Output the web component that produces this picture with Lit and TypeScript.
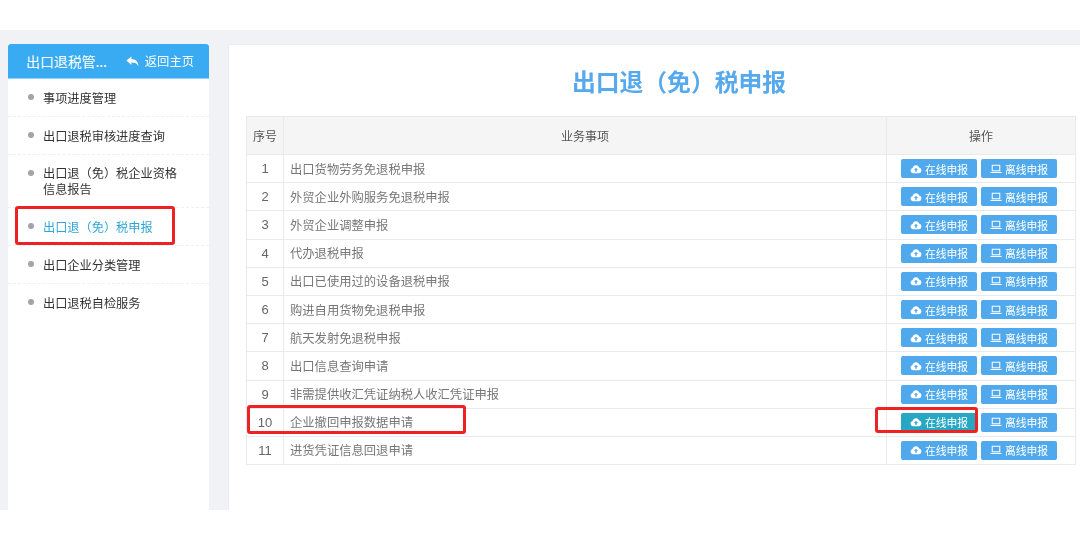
import { LitElement, html, css, svg } from "lit";
import { customElement } from "lit/decorators.js";

const rows = [
  "出口货物劳务免退税申报",
  "外贸企业外购服务免退税申报",
  "外贸企业调整申报",
  "代办退税申报",
  "出口已使用过的设备退税申报",
  "购进自用货物免退税申报",
  "航天发射免退税申报",
  "出口信息查询申请",
  "非需提供收汇凭证纳税人收汇凭证申报",
  "企业撤回申报数据申请",
  "进货凭证信息回退申请",
];
const menu = [
  { t: "事项进度管理" },
  { t: "出口退税审核进度查询" },
  { t: "出口退（免）税企业资格信息报告", tall: true },
  { t: "出口退（免）税申报", active: true },
  { t: "出口企业分类管理" },
  { t: "出口退税自检服务" },
];

const cloud = svg`<svg class="ic" viewBox="0 0 16 12" width="12" height="10"><path fill="#fff" d="M4 11.5a3.5 3.5 0 0 1-.6-6.9A4.6 4.6 0 0 1 12.2 4a3.8 3.8 0 0 1-.2 7.5z"/><path fill="#4fa9ec" d="M8 4.2l2.6 3H9v2.6H7V7.2H5.4z"/></svg>`;
const laptop = svg`<svg class="ic" viewBox="0 0 14 11" width="12" height="10"><path fill="none" stroke="#fff" stroke-width="1.2" d="M2.6 1h8.8v6.6H2.6z"/><path fill="#fff" d="M.5 8.9h13v1.3H.5z"/></svg>`;
const back = svg`<svg viewBox="0 0 14 12" width="13" height="11"><path fill="#fff" d="M5.8.6v2.7c4.6.2 7.5 2.7 7.7 7.8-1.5-3-3.8-4-7.7-4v2.800L.4 5z"/></svg>`;

@customElement("app-root")
export class AppRoot extends LitElement {
  static styles = css`
    :host { display: block; width: 1080px; height: 540px; position: relative; overflow: hidden; background: #fff;
      font-family: "Noto Sans CJK SC", "Liberation Sans", sans-serif; font-size: 12px; color: #555; }
    .shell { position: absolute; inset: 30px 0 30px 0; background: #f1f2f5; display: flex; gap: 19px; padding: 14px 0 0 8px; box-sizing: border-box; filter: blur(0.4px); }
    .side { width: 201px; background: #fff; flex: none; }
    .sh { height: 35px; background: #38abf2; border-radius: 3px 3px 0 0; color: #fff; display: flex; align-items: center; padding: 0 15px 0 18px; justify-content: space-between; border-bottom: 1px solid #8fd0f6; box-sizing: border-box; }
    .sh .ttl { font-size: 14px; letter-spacing: -0.1px; }
    .sh .bk { display: flex; align-items: center; gap: 6px; font-size: 12.3px; }
    .mi { height: 38px; box-sizing: border-box; border-bottom: 1px dashed #f0f0f0; padding: 0 22px 0 35px; display: flex; align-items: center; position: relative; color: #333; font-size: 12.2px; line-height: 16px; }
    .mi.tall { height: 53px; }
    .mi.act { color: #2ea7d6; }
    .mi.plain { border-bottom: none; }
    .mi::before { content: ""; position: absolute; left: 20px; top: 15px; width: 6px; height: 6px; border-radius: 50%; background: #a3a3ad; }
    .main { flex: 1; background: #fff; padding: 0 5px 0 17px; border: 1px solid #e9ecf0; border-right: none; border-bottom: none; }
    h1 { margin: 0; height: 71px; line-height: 72px; padding-left: 36px; text-align: center; font-size: 23.8px; font-weight: 700; color: #55a9ec; }
    table { width: 829px; border-collapse: collapse; table-layout: fixed; }
    th, td { border: 1px solid #e8eaee; padding: 0; }
    th { background: #f5f5f5; height: 37px; font-weight: 400; color: #555; font-size: 12px; }
    td { height: 27.2px; }
    td.n { text-align: center; font-size: 13px; color: #666; font-family: "Liberation Sans", sans-serif; }
    td.t { padding-left: 6px; color: #777; font-size: 12.3px; }
    .ops { display: flex; gap: 4px; padding-left: 14px; }
    .b { width: 76px; height: 19px; background: #4fa9ec; color: #fff; border-radius: 2px; display: flex; align-items: center; justify-content: center; gap: 3px; font-size: 10.8px; }
    .b.hov { background: #26a8c4; }
    .b.hov .ic path:nth-child(2) { fill: #26a8c4; }
    .mark { position: absolute; border: 3px solid #ee2222; border-radius: 3px; box-sizing: border-box; pointer-events: none; }
    .m1 { left: 15px; top: 206px; width: 160px; height: 39px; }
    .m2 { left: 247px; top: 405px; width: 219px; height: 29px; }
    .m3 { left: 875px; top: 407px; width: 103px; height: 26px; }
  `;

  render() {
    return html`
      <div class="shell">
        <aside class="side">
          <div class="sh"><span class="ttl">出口退税管...</span><span class="bk">${back}返回主页</span></div>
          ${menu.map((m, i) => html`<div class="mi ${m.tall ? "tall" : ""} ${m.active ? "act" : ""} ${i === menu.length - 1 ? "plain" : ""}">${m.t}</div>`)}
        </aside>
        <main class="main">
          <h1>出口退（免）税申报</h1>
          <table>
            <colgroup><col style="width:37px" /><col style="width:603px" /><col style="width:189px" /></colgroup>
            <thead><tr><th>序号</th><th>业务事项</th><th>操作</th></tr></thead>
            <tbody>
              ${rows.map((r, i) => html`<tr>
                <td class="n">${i + 1}</td>
                <td class="t">${r}</td>
                <td><div class="ops">
                  <div class="b ${i === 9 ? "hov" : ""}">${cloud}在线申报</div>
                  <div class="b">${laptop}离线申报</div>
                </div></td>
              </tr>`)}
            </tbody>
          </table>
        </main>
      </div>
      <div class="mark m1"></div>
      <div class="mark m2"></div>
      <div class="mark m3"></div>
    `;
  }
}
